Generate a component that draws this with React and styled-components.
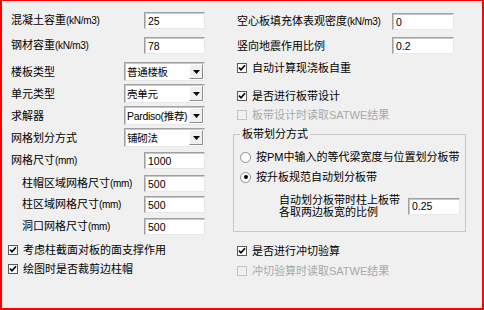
import React from 'react';
import styled, { createGlobalStyle } from 'styled-components';

const Global = createGlobalStyle`
  html, body { margin: 0; padding: 0; background: #f0f0f0; }
  body {
    font-family: "Liberation Sans", "Noto Sans CJK SC", sans-serif;
    font-size: 11px;
    color: #000;
  }
`;

const Window = styled.div`
  box-sizing: border-box;
  width: 484px;
  height: 310px;
  background: #f0f0f0;
  border: 2px solid #ff0000;
  border-top-width: 1px;
  display: flex;
  align-items: flex-start;
  gap: 28px;
  padding: 11px 0 0 6px;
`;

const Column = styled.div`
  display: flex;
  flex-direction: column;
  width: ${p => p.$w}px;
  flex: none;
`;

const Row = styled.div`
  display: flex;
  align-items: center;
  height: ${p => p.$h || 17}px;
  margin-top: ${p => p.$mt || 0}px;
  padding-left: ${p => p.$pl || 0}px;
  padding-right: ${p => p.$pr || 0}px;
`;

const Label = styled.span`
  flex: 1;
  white-space: nowrap;
  line-height: 14px;
  padding-left: ${p => p.$indent || 0}px;
`;

const Unit = styled.span`
  font-size: 10px;
  letter-spacing: -0.3px;
`;

const Field = styled.input`
  box-sizing: border-box;
  flex: none;
  width: ${p => p.$w}px;
  height: 17px;
  margin: 0;
  padding: 0 2px 0 3px;
  background: #fff;
  border: 1px solid;
  border-color: #a0a0a0 #e8e8e8 #e8e8e8 #a0a0a0;
  box-shadow: inset 1px 1px 0 #c8c8c8;
  font-family: "Liberation Sans", "Noto Sans CJK SC", sans-serif;
  font-size: 10.5px;
  color: #000;
  outline: none;
`;

const Select = styled.div`
  box-sizing: border-box;
  flex: none;
  width: ${p => p.$w}px;
  height: 19px;
  display: flex;
  align-items: stretch;
  background: #fff;
  border: 1px solid;
  border-color: #a0a0a0 #e8e8e8 #e8e8e8 #a0a0a0;
  box-shadow: inset 1px 1px 0 #c8c8c8;
  padding: 1px 1px 1px 2px;
`;

const SelectText = styled.span`
  flex: 1;
  display: flex;
  align-items: center;
  white-space: nowrap;
  overflow: hidden;
  font-size: 10.5px;
  letter-spacing: -0.3px;
`;

const ArrowButton = styled.span`
  box-sizing: border-box;
  flex: none;
  width: 14px;
  display: flex;
  align-items: center;
  justify-content: center;
  background: #f0f0f0;
  border: 1px solid;
  border-color: #ffffff #8a8a8a #8a8a8a #ffffff;
`;

const Arrow = () => (
  <svg width="7" height="4" viewBox="0 0 7 4">
    <path d="M0 0H7L3.5 4Z" fill="#000" />
  </svg>
);

const Box = styled.span`
  box-sizing: border-box;
  flex: none;
  width: 10px;
  height: 10px;
  margin-right: 5px;
  display: flex;
  align-items: center;
  justify-content: center;
  background: ${p => (p.$disabled ? '#f0f0f0' : '#fff')};
  border: 1px solid ${p => (p.$disabled ? '#c4c4c4' : '#5a5a5a')};
`;

const CheckText = styled.span`
  white-space: nowrap;
  line-height: 14px;
  color: ${p => (p.$disabled ? '#a8a8a8' : '#000')};
`;

const Check = ({ checked, disabled, children, mt, pl }) => (
  <Row $h={14} $mt={mt} $pl={pl}>
    <Box $disabled={disabled}>
      {checked && (
        <svg width="8" height="8" viewBox="0 0 8 8">
          <path d="M1 3.6L3 5.8L7 1.2" stroke="#000" strokeWidth="1.6" fill="none" />
        </svg>
      )}
    </Box>
    <CheckText $disabled={disabled}>{children}</CheckText>
  </Row>
);

const RadioCircle = styled.span`
  box-sizing: border-box;
  flex: none;
  width: 11px;
  height: 11px;
  border-radius: 50%;
  margin-right: 5px;
  background: #fff;
  border: 1px solid #8f8f8f;
  display: flex;
  align-items: center;
  justify-content: center;
`;

const Dot = styled.span`
  width: 4px;
  height: 4px;
  border-radius: 50%;
  background: #000;
`;

const Radio = ({ checked, children, mt }) => (
  <Row $h={14} $mt={mt}>
    <RadioCircle>{checked && <Dot />}</RadioCircle>
    <CheckText>{children}</CheckText>
  </Row>
);

const Group = styled.fieldset`
  box-sizing: border-box;
  margin: 5px 0 0 0;
  padding: 0 5px 13px 6px;
  border: 1px solid #c8c8c8;
  min-width: 0;
`;

const Legend = styled.legend`
  padding: 0 2px;
  line-height: 14px;
  font-size: 11px;
`;

const TwoLine = styled.span`
  flex: 1;
  padding-left: 39px;
  line-height: 12px;
  white-space: nowrap;
`;

const InputRow = ({ label, unit, value, w = 61, indent = 3, mt, pl, pr }) => (
  <Row $mt={mt} $pl={pl} $pr={pr}>
    <Label $indent={indent}>
      {label}
      {unit && <Unit>{unit}</Unit>}
    </Label>
    <Field $w={w} defaultValue={value} readOnly />
  </Row>
);

const SelectRow = ({ label, value, mt }) => (
  <Row $h={19} $mt={mt}>
    <Label $indent={3}>{label}</Label>
    <Select $w={81}>
      <SelectText>{value}</SelectText>
      <ArrowButton>
        <Arrow />
      </ArrowButton>
    </Select>
  </Row>
);

export default function App() {
  return (
    <>
      <Global />
      <Window>
        <Column $w={197}>
          <InputRow label="混凝土容重" unit="(kN/m3)" value="25" />
          <InputRow label="钢材容重" unit="(kN/m3)" value="78" mt={8} />
          <SelectRow label="楼板类型" value="普通楼板" mt={8} />
          <SelectRow label="单元类型" value="壳单元" mt={3} />
          <SelectRow label="求解器" value="Pardiso(推荐)" mt={3} />
          <SelectRow label="网格划分方式" value="铺砌法" mt={3} />
          <InputRow label="网格尺寸" unit="(mm)" value="1000" mt={5} />
          <InputRow label="柱帽区域网格尺寸" unit="(mm)" value="500" indent={14} mt={6} />
          <InputRow label="柱区域网格尺寸" unit="(mm)" value="500" indent={14} mt={4} />
          <InputRow label="洞口网格尺寸" unit="(mm)" value="500" indent={14} mt={5} />
          <Check checked mt={8}>考虑柱截面对板的面支撑作用</Check>
          <Check checked mt={5}>绘图时是否裁剪边柱帽</Check>
        </Column>

        <Column $w={233}>
          <InputRow label="空心板填充体表观密度" unit="(kN/m3)" value="0" w={62} indent={0} pl={4} pr={12} mt={1} />
          <InputRow label="竖向地震作用比例" value="0.2" w={62} indent={0} pl={4} pr={12} mt={7} />
          <Check checked mt={7} pl={4}>自动计算现浇板自重</Check>
          <Check checked mt={14} pl={4}>是否进行板带设计</Check>
          <Check disabled mt={5} pl={4}>板带设计时读取SATWE结果</Check>
          <Group>
            <Legend>板带划分方式</Legend>
            <Radio mt={9}>按PM中输入的等代梁宽度与位置划分板带</Radio>
            <Radio checked mt={6}>按升板规范自动划分板带</Radio>
            <Row $h={24} $mt={10}>
              <TwoLine>
                自动划分板带时柱上板带
                <br />
                各取两边板宽的比例
              </TwoLine>
              <Field $w={52} defaultValue="0.25" readOnly />
            </Row>
          </Group>
          <Check checked mt={12} pl={4}>是否进行冲切验算</Check>
          <Check disabled mt={6} pl={4}>冲切验算时读取SATWE结果</Check>
        </Column>
      </Window>
    </>
  );
}
